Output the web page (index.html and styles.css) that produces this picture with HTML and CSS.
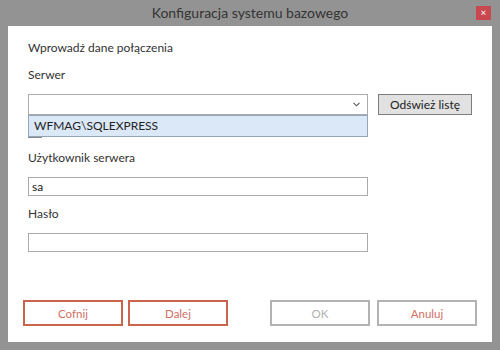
FILE: index.html
```html
<!DOCTYPE html>
<html lang="pl">

<head>
    <meta charset="UTF-8">
    <title>Konfiguracja systemu bazowego</title>
    <link rel="stylesheet" href="styles.css">
</head>

<body>
    <div class="window">
        <header class="titlebar">
            <span class="title">Konfiguracja systemu bazowego</span>
            <span class="close">&#215;</span>
        </header>

        <main class="content">
            <p class="label heading">Wprowadź dane połączenia</p>
            <p class="label">Serwer</p>

            <div class="server-row">
                <div class="combo">
                    <span class="chevron">
                        <svg width="7" height="5" viewBox="0 0 7 5"><path d="M0.5 0.8 L3.5 3.8 L6.5 0.8" fill="none" stroke="#555" stroke-width="1.1"/></svg>
                    </span>
                    <div class="combo-list">WFMAG\SQLEXPRESS</div>
                </div>
                <button type="button" class="refresh">Odśwież listę</button>
            </div>

            <div class="check-row">
                <span class="checkbox"></span>
            </div>

            <p class="label">Użytkownik serwera</p>
            <div class="input">sa</div>

            <p class="label">Hasło</p>
            <div class="input"></div>

            <div class="actions">
                <div class="group">
                    <button type="button" class="btn accent">Cofnij</button>
                    <button type="button" class="btn accent">Dalej</button>
                </div>
                <div class="group wide">
                    <button type="button" class="btn disabled">OK</button>
                    <button type="button" class="btn plain">Anuluj</button>
                </div>
            </div>
        </main>
    </div>
</body>

</html>
```

FILE: styles.css
```css
body {
    margin: 0;
    padding: 0;
    font-family: 'Lato', 'Noto Sans', sans-serif;
    color: #333;
}

.window {
    width: 500px;
    height: 350px;
    box-sizing: border-box;
    background-color: #939393;
    display: flex;
    flex-direction: column;
}

.titlebar {
    height: 26px;
    position: relative;
    display: flex;
    align-items: center;
    justify-content: center;
}

.title {
    font-size: 14px;
    color: #333;
    margin-top: -1px;
}

.close {
    position: absolute;
    top: 6px;
    right: 9px;
    width: 15px;
    height: 14px;
    background-color: #c9474e;
    color: #fff;
    font-size: 10px;
    line-height: 13px;
    text-align: center;
}

.content {
    flex-grow: 1;
    margin: 0 8px 8px;
    background-color: #fff;
    padding: 14px 15px 16px 20px;
    display: flex;
    flex-direction: column;
    box-sizing: border-box;
}

.label {
    margin: 0 0 11px;
    font-size: 12px;
    line-height: 16px;
    color: #333;
}

.server-row {
    display: flex;
    align-items: flex-start;
    gap: 10px;
}

.combo {
    width: 340px;
    height: 21px;
    box-sizing: border-box;
    border: 1px solid #acacac;
    position: relative;
}

.chevron {
    position: absolute;
    right: 7px;
    top: 6px;
    line-height: 0;
}

.combo-list {
    position: absolute;
    top: 20px;
    left: -1px;
    width: 340px;
    height: 22px;
    box-sizing: border-box;
    background-color: #dbe8f8;
    border: 1px solid #96a6b8;
    padding-left: 5px;
    font-size: 12px;
    line-height: 19px;
    color: #222;
    z-index: 1;
}

.refresh {
    width: 94px;
    height: 21px;
    padding: 0;
    border: 1px solid #7d7d7d;
    background-color: #e1e1e1;
    font-family: inherit;
    font-size: 12px;
    color: #222;
}

.check-row {
    display: flex;
    height: 14px;
    margin: 9px 0 12px;
}

.checkbox {
    width: 12px;
    height: 12px;
    border: 1px solid #8a8a8a;
}

.input {
    width: 340px;
    height: 19px;
    box-sizing: border-box;
    border: 1px solid #ababab;
    font-size: 12px;
    line-height: 17px;
    padding-left: 3px;
    color: #222;
    margin-bottom: 10px;
}

.actions {
    margin-top: auto;
    margin-left: -5px;
    display: flex;
    justify-content: space-between;
}

.group {
    display: flex;
    gap: 5px;
}

.group.wide {
    gap: 7px;
}

.btn {
    width: 100px;
    height: 26px;
    padding: 0;
    background-color: #fff;
    font-family: inherit;
    font-size: 11.5px;
    border: 2px solid #b3b3b3;
}

.btn.accent {
    border-color: #c8654c;
    color: #cf6f66;
}

.btn.plain {
    color: #cf6f66;
}

.btn.disabled {
    color: #b0b0b0;
}
```
